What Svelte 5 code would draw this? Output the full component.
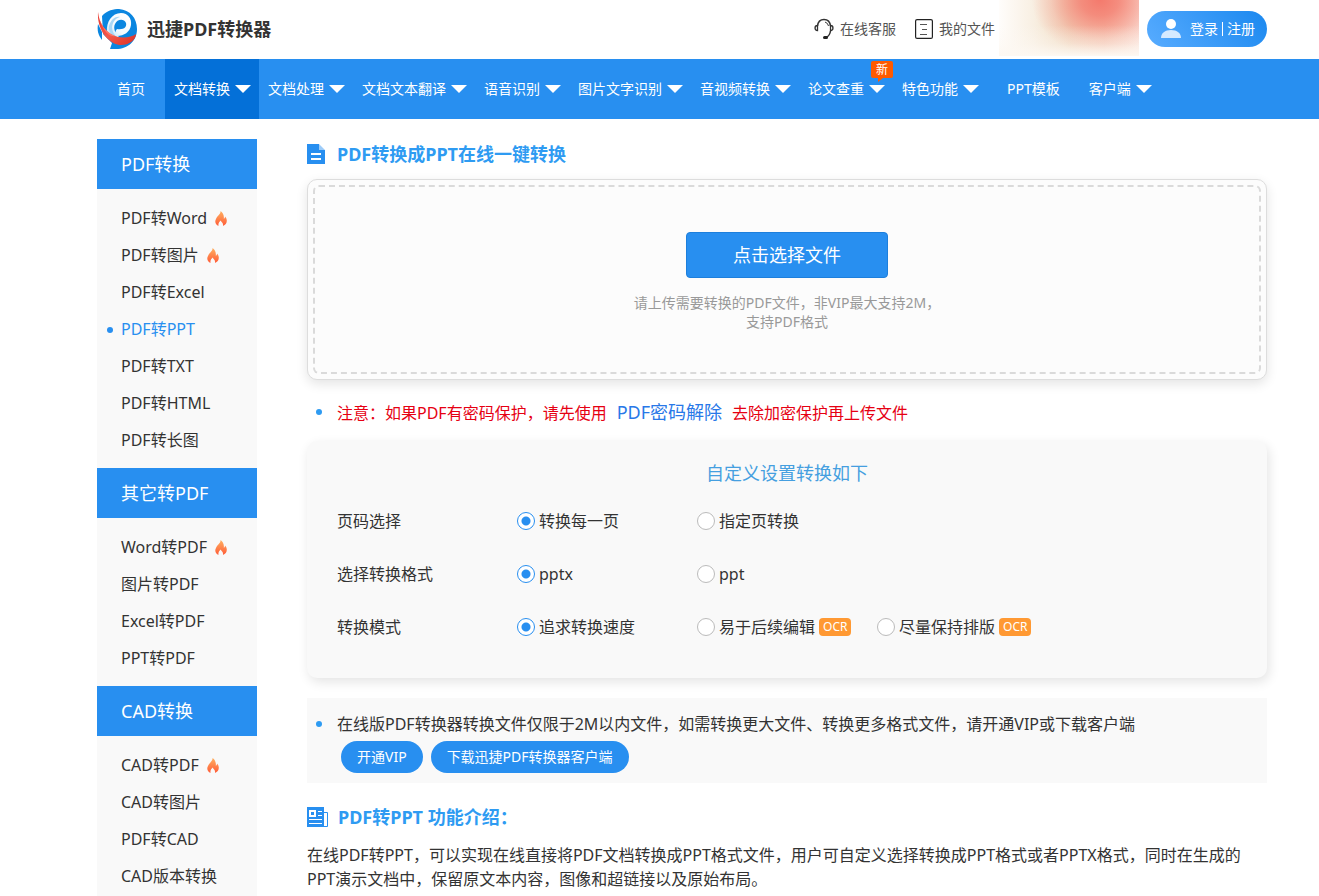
<script>
  const nav = [
    { text: '首页' },
    { text: '文档转换', menu: true, active: true },
    { text: '文档处理', menu: true },
    { text: '文档文本翻译', menu: true },
    { text: '语音识别', menu: true },
    { text: '图片文字识别', menu: true },
    { text: '音视频转换', menu: true },
    { text: '论文查重', menu: true, badge: '新' },
    { text: '特色功能', menu: true },
    { text: 'PPT模板' },
    { text: '客户端', menu: true }
  ];

  const groups = [
    {
      title: 'PDF转换',
      items: [
        { text: 'PDF转Word', hot: true },
        { text: 'PDF转图片', hot: true },
        { text: 'PDF转Excel' },
        { text: 'PDF转PPT', active: true },
        { text: 'PDF转TXT' },
        { text: 'PDF转HTML' },
        { text: 'PDF转长图' }
      ]
    },
    {
      title: '其它转PDF',
      items: [
        { text: 'Word转PDF', hot: true },
        { text: '图片转PDF' },
        { text: 'Excel转PDF' },
        { text: 'PPT转PDF' }
      ]
    },
    {
      title: 'CAD转换',
      items: [
        { text: 'CAD转PDF', hot: true },
        { text: 'CAD转图片' },
        { text: 'PDF转CAD' },
        { text: 'CAD版本转换' }
      ]
    }
  ];

  const settings = [
    { name: 'pages', label: '页码选择', options: [{ text: '转换每一页' }, { text: '指定页转换' }] },
    { name: 'format', label: '选择转换格式', options: [{ text: 'pptx' }, { text: 'ppt' }] },
    {
      name: 'mode',
      label: '转换模式',
      options: [{ text: '追求转换速度' }, { text: '易于后续编辑', ocr: true }, { text: '尽量保持排版', ocr: true }]
    }
  ];

  let selected = $state({ pages: 0, format: 0, mode: 0 });
</script>

<div class="page" lang="zh-CN">
  <header class="top">
    <a class="brand" href="#home">
      <svg width="40" height="40" viewBox="0 0 40 40" aria-hidden="true">
        <defs>
          <linearGradient id="ribbon" x1="0" y1="0" x2="1" y2="1"><stop offset="0" stop-color="#e8352c" /><stop offset=".5" stop-color="#f4584a" /><stop offset="1" stop-color="#d93025" /></linearGradient>
          <linearGradient id="loop" x1="1" y1="0" x2="0" y2="1"><stop offset="0" stop-color="#fff" /><stop offset=".6" stop-color="#f4fbff" /><stop offset="1" stop-color="#b9dff8" /></linearGradient>
        </defs>
        <path d="M5 7C10 1 17 0 22 0 33 1 40 9 40 20 40 32 31 40 19 40H13L15 34 6 25Z" fill="#0a86e0" />
        <path d="M1 15C0 21 1 26 5 31L5 23Z" fill="#0a86e0" />
        <path d="M10 23C9 13 15 4 24 4 31 4 35 10 34 16 33 23 27 27 20 27 18 24 18 22 20 20 27 21 30 18 29 14 27 9 20 10 18 15 16 19 18 24 22 28 16 28 12 26 10 23Z" fill="url(#loop)" />
        <path d="M12 17C14 10 19 7 23 8 19 9 16 12 15 18 15 22 17 26 20 28 15 27 11 23 12 17Z" fill="#a9d7f5" />
        <path d="M1 3C2 14 9 25 21 28 28 29 35 28 39 25 39 31 31 37 22 36 9 33 0 19 1 3Z" fill="url(#ribbon)" />
        <path d="M1 3C2 14 8 23 18 27 12 29 3 19 1 3Z" fill="#ff7566" />
      </svg>
      <span>迅捷PDF转换器</span>
    </a>
    <div class="tools">
      <a class="tool service" href="#service">
        <svg width="20" height="22" viewBox="0 0 20 22" fill="none" stroke="#333" aria-hidden="true">
          <path d="M3.500 8C4 3.500 6.500 1.500 10 1.500S16 3.500 16.500 8M16.500 13C16 16.500 14.500 18.500 12 19.500" stroke-width="1.500" />
          <path d="M3.500 7.500V12.500C.2 12.500 .2 7.500 3.500 7.500ZM16.500 7.500V12.500C19.800 12.500 19.800 7.500 16.500 7.500Z" stroke-width="1.300" />
          <rect x="9" y="18" width="5" height="3" rx="1.500" fill="#222" stroke="none" />
          <path d="M11 4Q14 5 14.500 8" />
        </svg>
        在线客服
      </a>
      <a class="tool files" href="#files">
        <svg width="18" height="20" viewBox="0 0 18 20" fill="none" aria-hidden="true">
          <rect x=".6" y=".6" width="16.800" height="18.800" rx="1.500" stroke="#222" stroke-width="1.200" />
          <path d="M5 5.500H12M7 10.500H12M5 15.500H12" stroke="#555" />
        </svg>
        我的文件
      </a>
      <div class="promo"></div>
      <button class="login">
        <svg width="20" height="20" viewBox="0 0 20 20" aria-hidden="true">
          <circle cx="10" cy="5" r="5" fill="#fff" />
          <path d="M0 19C0 14 4 11 10 11S20 14 20 19Z" fill="#d5eaff" />
        </svg>
        <span>登录</span><i></i><span>注册</span>
      </button>
    </div>
  </header>

  <nav>
    {#each nav as item}
      <a href="#nav" class:active={item.active} class:wide={!item.menu}>
        {item.text}
        {#if item.menu}
          <svg width="16" height="8" viewBox="0 0 16 8" aria-hidden="true"><path d="M0 0H16L8 8Z" fill="#fff" /></svg>
        {/if}
        {#if item.badge}<span class="badge">{item.badge}</span>{/if}
      </a>
    {/each}
  </nav>

  <div class="body">
    <aside>
      {#each groups as group}
        <h2>{group.title}</h2>
        <ul>
          {#each group.items as item}
            <li class:current={item.active}>
              <a href="#convert">{item.text}</a>
              {#if item.hot}
                <svg width="12" height="15" viewBox="0 0 12 15" aria-hidden="true">
                  <defs><linearGradient id="flame" x1="0" y1="0" x2="0" y2="1"><stop offset="0" stop-color="#ffb060" /><stop offset="1" stop-color="#ff5c38" /></linearGradient></defs>
                  <path d="M5.500 0C6 3 2 5 1 8 -.8 11 1 14 3.500 15 3 12 4.500 11 5.500 9.500 6.500 11 8.500 12 8 15 11 14 12.500 11 11.500 8 11 6.500 10.500 6 10 5.500 10 7 9.500 7.500 8.800 7.800 9.200 4.500 8 1.500 5.500 0Z" fill="url(#flame)" />
                </svg>
              {/if}
            </li>
          {/each}
        </ul>
      {/each}
    </aside>

    <main>
      <h1>
        <svg width="18" height="20" viewBox="0 0 18 20" aria-hidden="true">
          <path d="M0 0H12V6H18V20H0Z" fill="#288ff0" /><path d="M12 0 18 6H12Z" fill="#9dccf9" />
          <path d="M4 10H14M4 15H14" stroke="#fff" stroke-width="2" />
        </svg>
        PDF转换成PPT在线一键转换
      </h1>

      <section class="upload">
        <div class="drop">
          <button class="choose">点击选择文件</button>
          <p>请上传需要转换的PDF文件，非VIP最大支持2M，<br />支持PDF格式</p>
        </div>
      </section>

      <p class="notice">注意：如果PDF有密码保护，请先使用<a href="#unlock">PDF密码解除</a>去除加密保护再上传文件</p>

      <section class="panel">
        <h3>自定义设置转换如下</h3>
        {#each settings as row}
          <div class="row" role="radiogroup" aria-label={row.label}>
            <span>{row.label}</span>
            {#each row.options as option, i}
              <label>
                <input type="radio" name={row.name} value={i} bind:group={selected[row.name]} />
                {option.text}
                {#if option.ocr}<b>OCR</b>{/if}
              </label>
            {/each}
          </div>
        {/each}
      </section>

      <section class="vip">
        <p>在线版PDF转换器转换文件仅限于2M以内文件，如需转换更大文件、转换更多格式文件，请开通VIP或下载客户端</p>
        <div class="actions">
          <a href="#vip">开通VIP</a>
          <a href="#download">下载迅捷PDF转换器客户端</a>
        </div>
      </section>

      <h1 class="intro">
        <svg width="21" height="20" viewBox="0 0 21 20" aria-hidden="true">
          <path d="M0 0H17V20H0Z" fill="#288ff0" /><path d="M17 5.500H20.500V19.500H16" fill="none" stroke="#288ff0" />
          <path d="M2 3H9V10H2ZM11 4H15V5H11ZM11 8H15V9H11ZM2 12H15V13H2ZM2 16H15V17H2Z" fill="#fff" />
          <path d="M4 5H7V8H4Z" fill="#288ff0" />
        </svg>
        PDF转PPT 功能介绍：
      </h1>
      <p class="description">在线PDF转PPT，可以实现在线直接将PDF文档转换成PPT格式文件，用户可自定义选择转换成PPT格式或者PPTX格式，同时在生成的PPT演示文档中，保留原文本内容，图像和超链接以及原始布局。</p>
    </main>
  </div>
</div>

<style>
  :global(body) { margin: 0; background: #fff; }
  .page { font: 16px/24px "Noto Sans", "Noto Sans CJK SC", sans-serif; color: #333; }
  a { color: inherit; text-decoration: none; }
  h1, h2, h3, p, ul { margin: 0; padding: 0; font-weight: inherit; }
  ul { list-style: none; }
  svg { flex: none; display: block; }
  button { border: 0; font: inherit; color: #fff; cursor: pointer; }

  .top { display: flex; justify-content: space-between; height: 57px; padding: 0 52px 2px 97px; }
  .brand { display: flex; align-items: center; gap: 10px; font-size: 18px; font-weight: 700; white-space: nowrap; }
  .tools { display: flex; align-items: center; font-size: 14px; color: #555; white-space: nowrap; }
  .tool { display: flex; align-items: center; gap: 6px; }
  .files { margin-left: 19px; }
  .promo {
    align-self: flex-start; width: 140px; height: 56px; margin: 0 8px 0 4px;
    background:
      linear-gradient(0deg, #fdf8f2 0, #fdf8f270 22%, #fdf8f200 55%),
      radial-gradient(ellipse 68px 56px at 72% 0, #f47a6d 0, #f47b6ecc 28%, #f5887aaa 45%, #f5968850 72%, #f5a99a00 100%),
      linear-gradient(90deg, #fffdfb 0, #f8efe2 25%, #efd8bd 50%, #f3cdb6 75%, #fbe2d9 100%);
  }
  .login {
    display: flex; align-items: center; width: 120px; height: 36px; padding: 0 0 0 14px; border-radius: 18px;
    background: linear-gradient(50deg, #58acff, #1b88ef); white-space: nowrap;
  }
  .login svg { margin-right: 9px; }
  .login i { width: 1px; height: 14px; margin: 0 4px; background: #fff; }

  nav { display: flex; height: 60px; padding-left: 97px; background: #288ff0; color: #fff; font-size: 14px; line-height: 60px; white-space: nowrap; }
  nav a { position: relative; display: flex; align-items: center; gap: 5px; padding: 0 8px 0 9px; }
  nav a.wide { padding: 0 20px; }
  nav a.active { background: #0470d8; }
  .badge { position: absolute; top: 2px; right: 0; width: 22px; border-radius: 2px; background: #ff5a00; font-size: 12px; line-height: 17px; text-align: center; }
  .badge::after { content: ""; position: absolute; top: 17px; left: 7px; width: 5px; height: 4px; background: #ff5a00; clip-path: polygon(0 0, 100% 0, 0 100%); }

  .body { display: flex; align-items: flex-start; gap: 50px; padding: 20px 52px 0 97px; }
  aside { flex: none; width: 160px; background: #f9f9f9; }
  aside h2 { padding-left: 24px; background: #288ff0; color: #fff; font-size: 18px; line-height: 50px; }
  aside ul { padding: 11px 0 9px; }
  li { position: relative; display: flex; align-items: center; gap: 8px; padding-left: 24px; line-height: 37px; white-space: nowrap; }
  li.current { color: #288ff0; }
  li.current::before { content: ""; position: absolute; left: 10px; width: 6px; height: 6px; border-radius: 50%; background: #288ff0; }

  main { flex: 1; min-width: 0; }
  h1 { display: flex; align-items: center; gap: 12px; height: 30px; color: #2e9bf2; font-size: 18px; font-weight: 700; }
  .upload { margin-top: 10px; padding: 5px; border: 1px solid #ddd; border-radius: 10px; background: #fcfcfc; box-shadow: 0 4px 12px #0000001c; }
  .drop { display: flex; flex-direction: column; align-items: center; padding: 45px 20px 41px; border: 2px dashed #dadada; border-radius: 6px; }
  .choose { width: 202px; height: 46px; border: 1px solid #1d7fdc; border-radius: 4px; background: #288ff0; font-size: 18px; }
  .drop p { margin-top: 15px; color: #999; font-size: 14px; line-height: 19px; text-align: center; }

  .notice, .vip p { position: relative; padding-left: 30px; }
  .notice::before, .vip p::before { content: ""; position: absolute; top: 9px; left: 9px; width: 6px; height: 6px; border-radius: 50%; background: #2e9bf2; }
  .notice { margin-top: 20px; color: #e60012; }
  .notice a { margin: 0 10px; color: #2878e8; font-size: 18px; }

  .panel { margin-top: 16px; padding: 20px 30px 25px; border-radius: 10px; background: #f9f9f9; box-shadow: 2px 4px 12px #0000001c; }
  .panel h3 { color: #459fe0; font-size: 18px; text-align: center; }
  .row { display: grid; grid-template-columns: 180px 180px 180px 180px; align-items: center; height: 53px; white-space: nowrap; }
  .panel h3 + .row { margin-top: 9px; }
  label { display: flex; align-items: center; gap: 4px; }
  input { appearance: none; flex: none; width: 18px; height: 18px; margin: 0; border: 1px solid #bbb; border-radius: 50%; background: #fff; }
  input:checked { border-color: #288ff0; background: radial-gradient(circle, #288ff0 4px, #fff 5px); }
  label b { padding: 0 4px; border-radius: 4px; background: #ff9933; color: #fff; font-size: 12px; font-weight: 400; line-height: 18px; }

  .vip { margin-top: 20px; padding: 14px 0 10px; background: #f9f9f9; }
  .actions { display: flex; gap: 8px; margin: 5px 0 0 34px; }
  .actions a { padding: 0 16px; border-radius: 16px; background: #288ff0; color: #fff; font-size: 14px; line-height: 32px; }
  .intro { margin-top: 19px; gap: 10px; }
  .description { margin-top: 11px; }
</style>
